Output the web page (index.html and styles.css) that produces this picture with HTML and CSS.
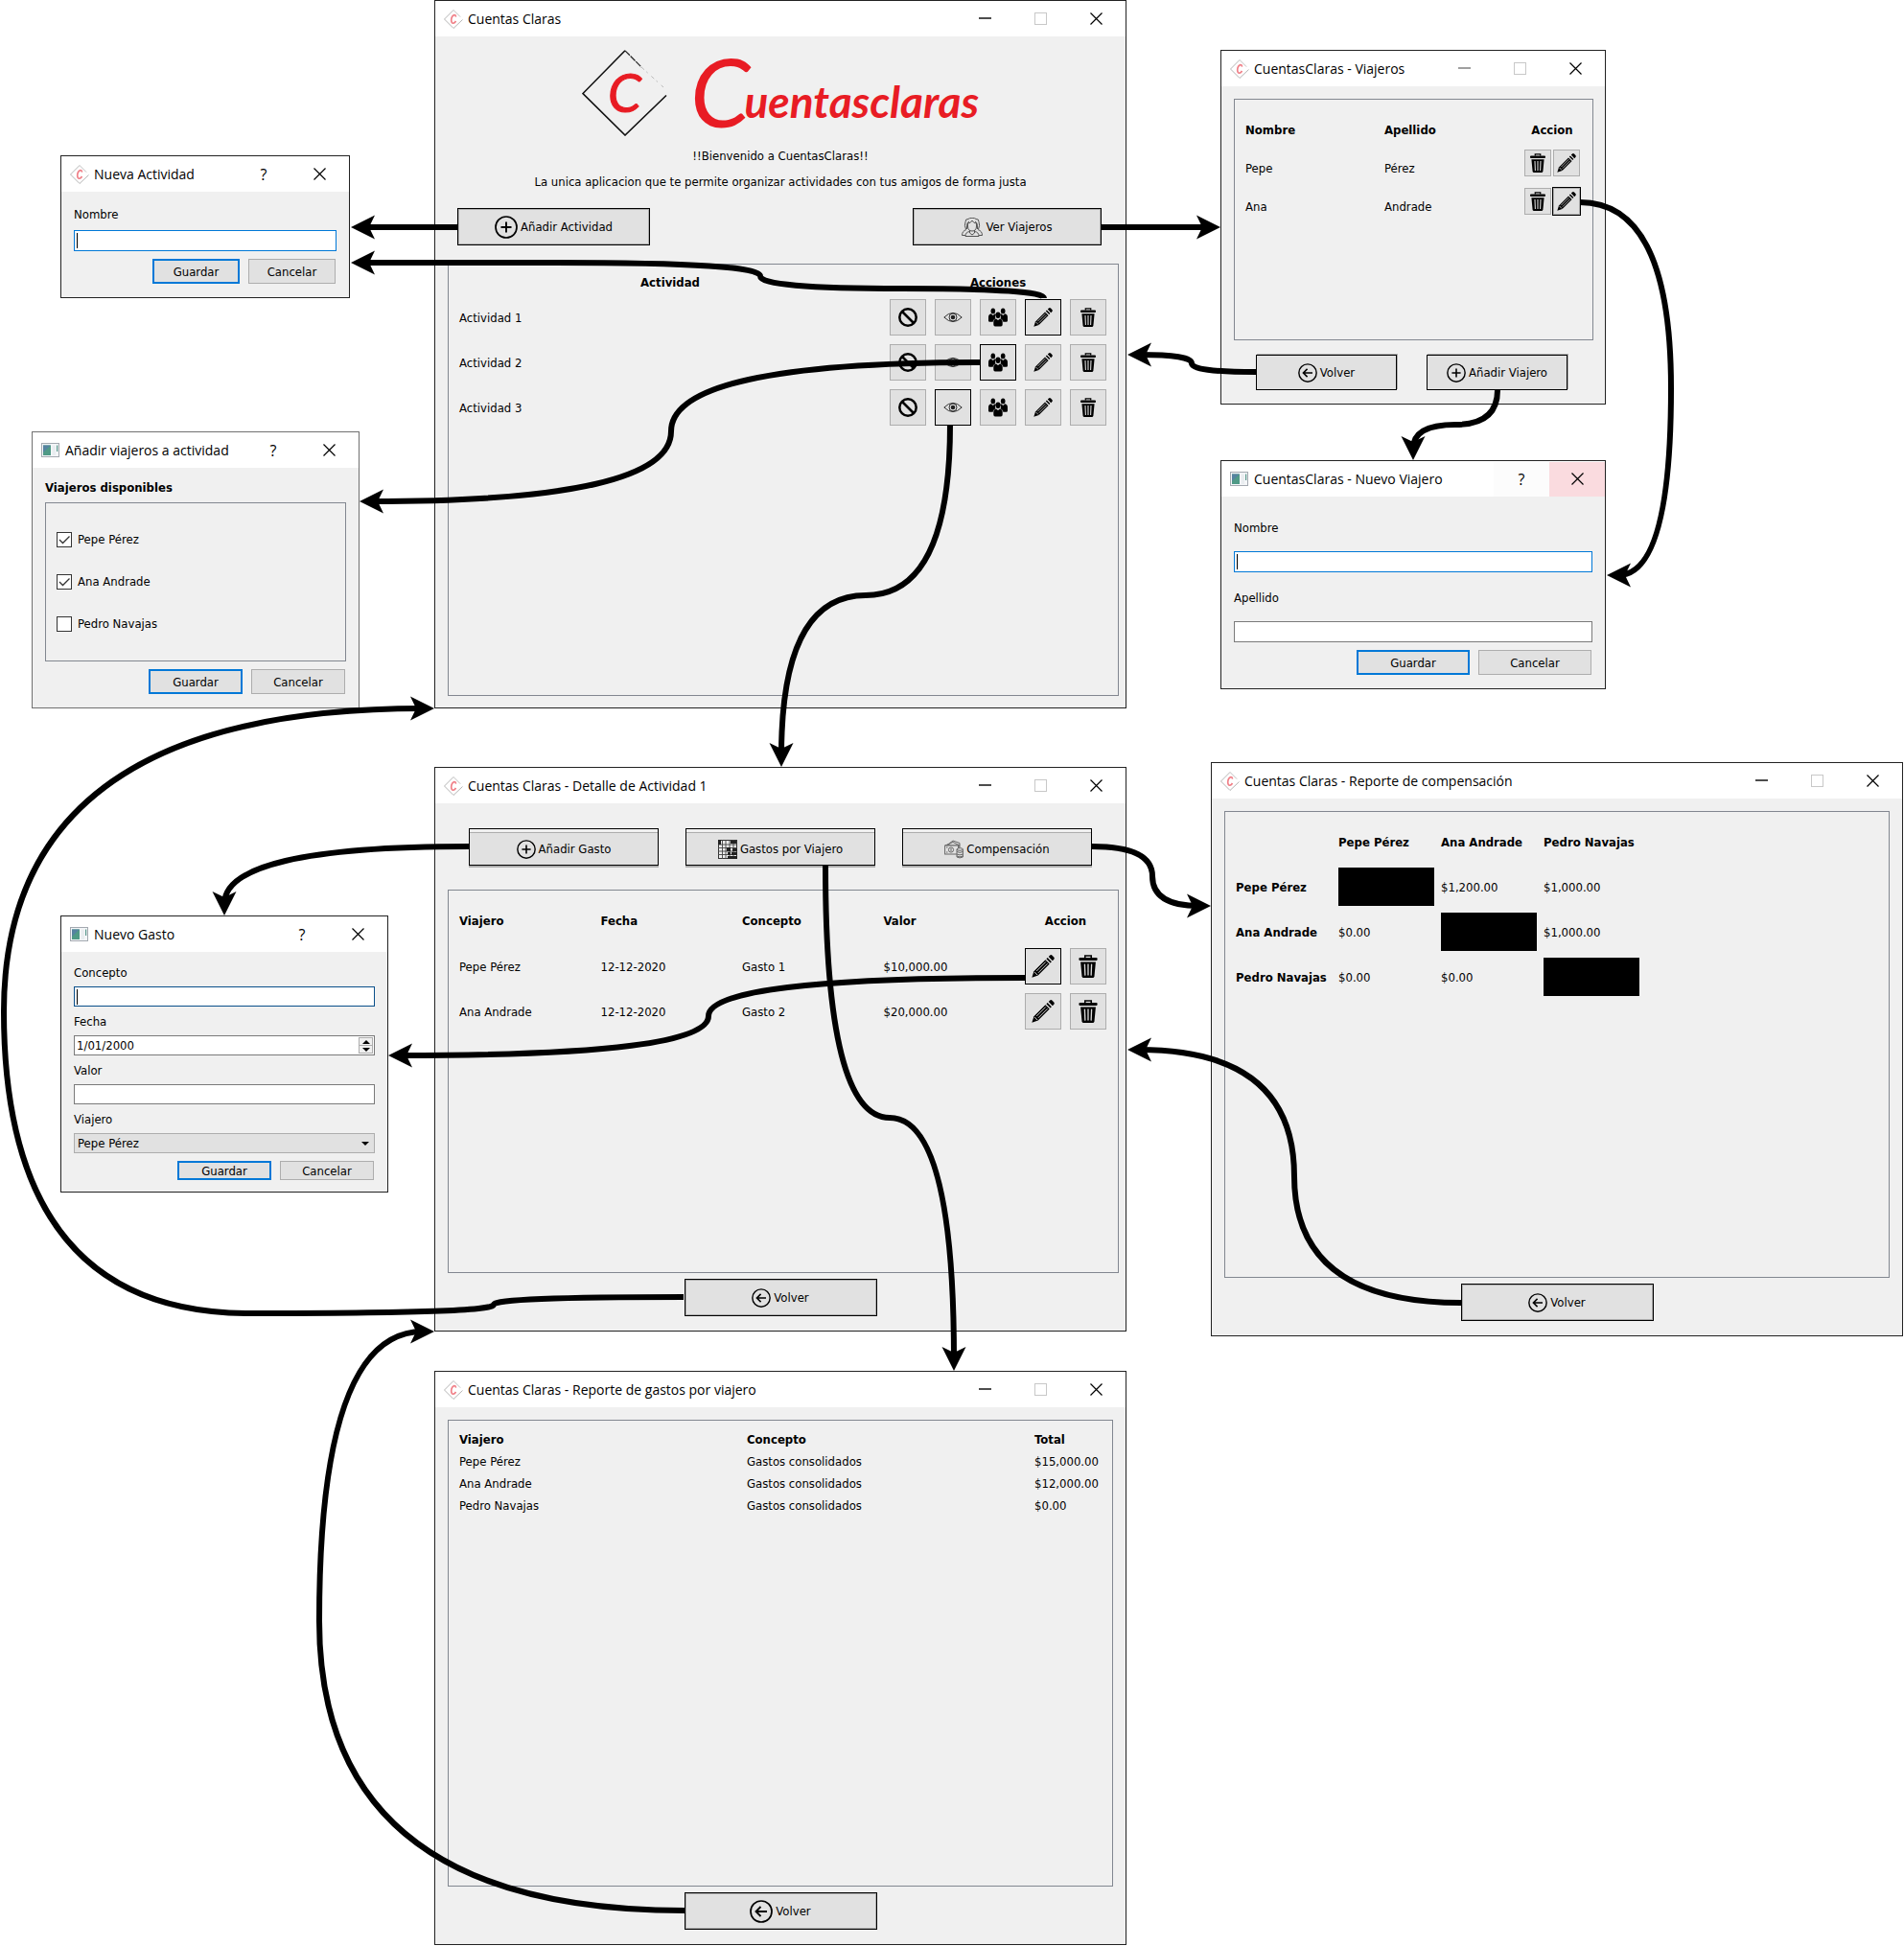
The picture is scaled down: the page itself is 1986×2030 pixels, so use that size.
FILE: index.html
```html
<!DOCTYPE html>
<html lang="es">
<head>
<meta charset="utf-8">
<title>Cuentas Claras - Mapa de navegación</title>
<meta name="viewport" content="width=device-width, initial-scale=1">
<link rel="stylesheet" href="styles.css">
</head>
<body>

<svg class="symbols" aria-hidden="true">
  <symbol id="i-logo" viewBox="0 0 20 20">
    <path d="M17 7.500 10 .5 .5 10 10 19.500 19.500 10.500" fill="none" stroke="#b4b4b4"/>
    <path d="M10 .5 17 7.500" fill="none" stroke="#e4e4e4"/>
    <path d="M12.400 7.600Q12.500 5.500 10.800 5.600 8 6.300 7.700 11q.2 3.600 2.200 3.200 1.600-.4 2.600-2.200" fill="none" stroke="#f08088" stroke-width="1.700"/>
  </symbol>
  <symbol id="i-app" viewBox="0 0 19 16">
    <rect x=".5" y=".5" width="18" height="14" fill="#f4f6f8" stroke="#a3a9b0"/>
    <rect x="2" y="2.500" width="8" height="10.500" fill="#4f9a86"/>
    <path d="M2 2.500h8L2 10z" fill="#5583a0"/>
    <rect x="11.500" y="2.500" width="3.500" height="10.500" fill="#e9edf0"/>
    <rect x="16" y="2.500" width="1.200" height="6.500" fill="#5b9a8e"/>
  </symbol>
  <symbol id="i-min" viewBox="0 0 13 13"><path d="M0 6h13" stroke="currentColor" stroke-width="1.400"/></symbol>
  <symbol id="i-max" viewBox="0 0 13 13"><rect x=".5" y=".5" width="12" height="12" fill="none" stroke="#c8c8c8"/></symbol>
  <symbol id="i-close" viewBox="0 0 13 13"><path d="M.5.5l12 12M12.500.5l-12 12" stroke="currentColor" stroke-width="1.200"/></symbol>
  <symbol id="i-plus" viewBox="0 0 24 24"><circle cx="12" cy="12" r="11" fill="none" stroke="currentColor" stroke-width="1.700"/><path d="M12 6.500v11M6.500 12h11" stroke="currentColor" stroke-width="1.900"/></symbol>
  <symbol id="i-back" viewBox="0 0 24 24"><circle cx="12" cy="12" r="11" fill="none" stroke="currentColor" stroke-width="1.700"/><path d="M18 12H7M11.500 7 6.500 12l5 5" fill="none" stroke="currentColor" stroke-width="1.900"/></symbol>
  <symbol id="i-ban" viewBox="0 0 20 20"><circle cx="10" cy="10" r="8.700" fill="none" stroke="currentColor" stroke-width="2.500"/><path d="M4 4l12 12" stroke="currentColor" stroke-width="2.500"/></symbol>
  <symbol id="i-eye" viewBox="0 0 20 20"><path d="M.8 10Q10 .8 19.200 10 10 19.200.8 10z" fill="none" stroke="#333"/><circle cx="10" cy="10" r="4" fill="none" stroke="#333"/><circle cx="10" cy="10" r="2.300" fill="#222"/></symbol>
  <symbol id="i-group" viewBox="0 0 20 20">
    <ellipse cx="4.800" cy="3.400" rx="2.300" ry="2.900"/><ellipse cx="15.200" cy="3.400" rx="2.300" ry="2.900"/>
    <path d="M0 13.500V10q0-3.300 2.800-3.700l2 1.600 2-1.600 1.200.6Q6 9 7.400 11.200 5 12.200 4.600 14.800H1.400Q0 14.800 0 13.500zM20 13.500V10q0-3.300-2.800-3.700l-2 1.600-2-1.600-1.200.6Q14 9 12.600 11.200q2.400 1 2.800 3.600h3.200q1.400 0 1.400-1.300z"/>
    <ellipse cx="10" cy="7.800" rx="2.500" ry="3.200"/><path d="M5.300 17.500V15q0-3 2.700-3.600l2 1.500 2-1.500q2.700.6 2.700 3.600v2.500q0 2-1.700 2H7q-1.700 0-1.700-2z"/>
  </symbol>
  <symbol id="i-pencil" viewBox="0 0 20 20">
    <path d="M14.800 1.600 16 .4q1-.7 2 .2l1.400 1.500q.8 1 0 1.900L18.200 5.200zM13.900 2.500l3.500 3.500-1.100 1.100-3.500-3.500z"/>
    <path d="M12 4.400 15.600 8 5.600 18 .3 19.700 2 14.400z"/><path d="M12.300 6.200 4.300 14.200M13.800 7.700l-8 8" stroke="#d8d8d8" stroke-width=".8"/><path d="M2.500 14.900l2.600 2.600" stroke="#d8d8d8" stroke-width=".8"/>
  </symbol>
  <symbol id="i-trash" viewBox="0 0 20 20">
    <path d="M7.300 2.600V.8h5.400v1.800" fill="none" stroke="currentColor" stroke-width="1.300"/><rect x="2" y="2.400" width="16" height="2.600" rx="1"/>
    <path d="M3.400 6.300h13.200l-1.200 12.400q-.2 1.300-1.500 1.300H6.100q-1.300 0-1.500-1.300z"/><path d="M7 8l.4 10M10 8v10M13 8l-.4 10" stroke="#dcdcdc" stroke-width="1.100"/>
  </symbol>
  <symbol id="i-people" viewBox="0 0 22 20">
    <g fill="none" stroke="#555" stroke-width="1"><path d="M4 4.500Q4 1 7 1.500q1-1.200 4-1.200T15 1.500q3-.5 3 3 1.500 4-.5 7.500M4 4.500q-1.500 4 .5 7.500M6.500 6q3 0 4.500-3 1.500 3 4.500 3v3q0 5-4.500 5T6.500 9zM8 4q-3 1-2.500 8M14 4q3 1 2.500 8M8.500 13v3l2.500 2 2.500-2v-3M8.500 14.500Q4 15 4 19.500h14q0-4.500-4.500-5M5 12.500Q.5 14 .5 18.500H4M17 12.500q4.500 1.500 4.500 6H18"/></g>
  </symbol>
  <symbol id="i-sheet" viewBox="0 0 20 20">
    <rect x=".5" y=".5" width="19" height="19" fill="#ededed" stroke="#333"/><path d="M0 5h20M0 8.500h20M0 12h20M0 15.500h20M4.500 0v20M8 0v20M12 0v20M16 0v20" stroke="#444" stroke-width=".9"/>
    <path d="M0 0h3v5H0zM13 1h6v3h-6zM9 8h4v4H9zM15 9h5v3h-5zM10 13h3v3h-3zM14 13h6v3h-6zM10 17h10v3H10z" fill="#222"/>
  </symbol>
  <symbol id="i-money" viewBox="0 0 20 20">
    <g fill="#e1e1e1" stroke="#666"><path d="M3 5.500 9 1l7 2.500V8zM1 6l8-3.500L16 6z"/><rect x=".6" y="6" width="14" height="9"/><circle cx="7" cy="10.500" r="2.600"/><path d="M2 8h1.500M2 13h1.500M7 9v3" /><path d="M13 10v8q3 1.800 6.400 0v-8z"/><ellipse cx="16.200" cy="10" rx="3.200" ry="1.300"/><path d="M13 12.500q3 1.800 6.400 0M13 15q3 1.800 6.400 0M13 17q3 1.800 6.400 0" fill="none"/></g>
  </symbol>
</svg>

<main class="canvas">

  <section class="window w-main">
    <header class="titlebar">
      <svg class="app-icon"><use href="#i-logo"/></svg><h2>Cuentas Claras</h2>
      <button class="cap" aria-label="Minimizar"><svg><use href="#i-min"/></svg></button><button class="cap" aria-label="Maximizar" disabled><svg><use href="#i-max"/></svg></button><button class="cap" aria-label="Cerrar"><svg><use href="#i-close"/></svg></button>
    </header>
    <div class="content">
      <div class="brand">
        <svg class="brand-mark" viewBox="0 0 89 90" aria-hidden="true">
          <path d="M45 .8 1 45.500 45 89 88 47.500" fill="none" stroke="#111" stroke-width="1.600"/>
          <path d="M45 .8 62 18" fill="none" stroke="#222" stroke-width="1.200" stroke-dasharray="7 1"/>
          <path d="M62 18 85 39" fill="none" stroke="#bbb" stroke-dasharray="4 3 2 5"/>
          <text x="27" y="65" class="mark-letter">C</text>
        </svg>
        <h1 class="wordmark"><span class="initial">C</span>uentasclaras</h1>
      </div>
      <p class="welcome">!!Bienvenido a CuentasClaras!!</p>
      <p class="welcome tagline">La unica aplicacion que te permite organizar actividades con tus amigos de forma justa</p>
      <div class="main-actions">
        <button class="btn w201"><svg class="i24"><use href="#i-plus"/></svg>Añadir Actividad</button>
        <button class="btn w197"><svg class="i22"><use href="#i-people"/></svg>Ver Viajeros</button>
      </div>
      <div class="panel main-panel">
        <table class="grid-9 activities">
          <colgroup><col><col class="c226"></colgroup>
          <thead><tr><th class="mid">Actividad</th><th class="mid">Acciones</th></tr></thead>
          <tbody>
            <tr><td>Actividad 1</td><td><div class="tools">
              <button class="tool" aria-label="Terminar"><svg><use href="#i-ban"/></svg></button><button class="tool" aria-label="Ver"><svg><use href="#i-eye"/></svg></button><button class="tool" aria-label="Viajeros"><svg><use href="#i-group"/></svg></button><button class="tool marked" aria-label="Editar"><svg><use href="#i-pencil"/></svg></button><button class="tool" aria-label="Borrar"><svg><use href="#i-trash"/></svg></button></div></td></tr>
            <tr><td>Actividad 2</td><td><div class="tools">
              <button class="tool" aria-label="Terminar"><svg><use href="#i-ban"/></svg></button><button class="tool" aria-label="Ver"><svg><use href="#i-eye"/></svg></button><button class="tool marked" aria-label="Viajeros"><svg><use href="#i-group"/></svg></button><button class="tool" aria-label="Editar"><svg><use href="#i-pencil"/></svg></button><button class="tool" aria-label="Borrar"><svg><use href="#i-trash"/></svg></button></div></td></tr>
            <tr><td>Actividad 3</td><td><div class="tools">
              <button class="tool" aria-label="Terminar"><svg><use href="#i-ban"/></svg></button><button class="tool marked" aria-label="Ver"><svg><use href="#i-eye"/></svg></button><button class="tool" aria-label="Viajeros"><svg><use href="#i-group"/></svg></button><button class="tool" aria-label="Editar"><svg><use href="#i-pencil"/></svg></button><button class="tool" aria-label="Borrar"><svg><use href="#i-trash"/></svg></button></div></td></tr>
          </tbody>
        </table>
      </div>
    </div>
  </section>

  <section class="window w-travelers">
    <header class="titlebar">
      <svg class="app-icon"><use href="#i-logo"/></svg><h2>CuentasClaras - Viajeros</h2>
      <button class="cap dim" aria-label="Minimizar"><svg><use href="#i-min"/></svg></button><button class="cap" aria-label="Maximizar" disabled><svg><use href="#i-max"/></svg></button><button class="cap" aria-label="Cerrar"><svg><use href="#i-close"/></svg></button>
    </header>
    <div class="content">
      <div class="panel travelers-panel">
        <table class="travelers">
          <colgroup><col class="c145"><col><col class="c58"></colgroup>
          <thead><tr><th>Nombre</th><th>Apellido</th><th class="mid">Accion</th></tr></thead>
          <tbody>
            <tr><td>Pepe</td><td>Pérez</td><td class="top"><div class="tools tight"><button class="tool small" aria-label="Borrar"><svg><use href="#i-trash"/></svg></button><button class="tool small" aria-label="Editar"><svg><use href="#i-pencil"/></svg></button></div></td></tr>
            <tr><td>Ana</td><td>Andrade</td><td class="top"><div class="tools tight"><button class="tool small" aria-label="Borrar"><svg><use href="#i-trash"/></svg></button><button class="tool small marked" aria-label="Editar"><svg><use href="#i-pencil"/></svg></button></div></td></tr>
          </tbody>
        </table>
      </div>
      <div class="travelers-actions">
        <button class="btn flat w147"><svg class="i20"><use href="#i-back"/></svg>Volver</button>
        <button class="btn flat w147"><svg class="i20"><use href="#i-plus"/></svg>Añadir Viajero</button>
      </div>
    </div>
  </section>

  <section class="window w-activity">
    <header class="titlebar">
      <svg class="app-icon"><use href="#i-logo"/></svg><h2>Nueva Actividad</h2>
      <button class="cap" aria-label="Ayuda">?</button><button class="cap" aria-label="Cerrar"><svg><use href="#i-close"/></svg></button>
    </header>
    <form class="content form activity-form">
      <label for="act-nombre">Nombre</label>
      <input class="field active" id="act-nombre" type="text">
      <div class="dialog-actions"><button type="button" class="dlg primary w91">Guardar</button><button type="button" class="dlg w91">Cancelar</button></div>
    </form>
  </section>

  <section class="window soft w-assign">
    <header class="titlebar">
      <svg class="app-icon win"><use href="#i-app"/></svg><h2>Añadir viajeros a actividad</h2>
      <button class="cap" aria-label="Ayuda">?</button><button class="cap" aria-label="Cerrar"><svg><use href="#i-close"/></svg></button>
    </header>
    <form class="content form assign-form">
      <h3>Viajeros disponibles</h3>
      <div class="panel check-list">
        <label><input type="checkbox" checked>Pepe Pérez</label>
        <label><input type="checkbox" checked>Ana Andrade</label>
        <label><input type="checkbox">Pedro Navajas</label>
      </div>
      <div class="dialog-actions"><button type="button" class="dlg primary w98">Guardar</button><button type="button" class="dlg w98">Cancelar</button></div>
    </form>
  </section>

  <section class="window w-traveler">
    <header class="titlebar">
      <svg class="app-icon win"><use href="#i-app"/></svg><h2>CuentasClaras - Nuevo Viajero</h2>
      <button class="cap faded" aria-label="Ayuda">?</button><button class="cap hot" aria-label="Cerrar"><svg><use href="#i-close"/></svg></button>
    </header>
    <form class="content form traveler-form">
      <label for="vj-nombre">Nombre</label>
      <input class="field active" id="vj-nombre" type="text">
      <label for="vj-apellido">Apellido</label>
      <input class="field" id="vj-apellido" type="text">
      <div class="dialog-actions"><button type="button" class="dlg primary w118">Guardar</button><button type="button" class="dlg w118">Cancelar</button></div>
    </form>
  </section>

  <section class="window w-detail">
    <header class="titlebar">
      <svg class="app-icon"><use href="#i-logo"/></svg><h2>Cuentas Claras - Detalle de Actividad 1</h2>
      <button class="cap" aria-label="Minimizar"><svg><use href="#i-min"/></svg></button><button class="cap" aria-label="Maximizar" disabled><svg><use href="#i-max"/></svg></button><button class="cap" aria-label="Cerrar"><svg><use href="#i-close"/></svg></button>
    </header>
    <div class="content">
      <div class="detail-actions">
        <button class="btn lifted"><svg class="i20"><use href="#i-plus"/></svg>Añadir Gasto</button>
        <button class="btn lifted"><svg class="i20"><use href="#i-sheet"/></svg>Gastos por Viajero</button>
        <button class="btn lifted"><svg class="i20"><use href="#i-money"/></svg>Compensación</button>
      </div>
      <div class="panel detail-panel">
        <table class="grid-9 expenses">
          <colgroup><col><col><col><col><col class="c85"></colgroup>
          <thead><tr><th>Viajero</th><th>Fecha</th><th>Concepto</th><th>Valor</th><th class="mid">Accion</th></tr></thead>
          <tbody>
            <tr><td>Pepe Pérez</td><td>12-12-2020</td><td>Gasto 1</td><td>$10,000.00</td><td><div class="tools"><button class="tool big marked" aria-label="Editar"><svg><use href="#i-pencil"/></svg></button><button class="tool big" aria-label="Borrar"><svg><use href="#i-trash"/></svg></button></div></td></tr>
            <tr><td>Ana Andrade</td><td>12-12-2020</td><td>Gasto 2</td><td>$20,000.00</td><td><div class="tools"><button class="tool big" aria-label="Editar"><svg><use href="#i-pencil"/></svg></button><button class="tool big" aria-label="Borrar"><svg><use href="#i-trash"/></svg></button></div></td></tr>
          </tbody>
        </table>
      </div>
      <div class="foot"><button class="btn w201"><svg class="i20"><use href="#i-back"/></svg>Volver</button></div>
    </div>
  </section>

  <section class="window w-expense">
    <header class="titlebar">
      <svg class="app-icon win"><use href="#i-app"/></svg><h2>Nuevo Gasto</h2>
      <button class="cap" aria-label="Ayuda">?</button><button class="cap" aria-label="Cerrar"><svg><use href="#i-close"/></svg></button>
    </header>
    <form class="content form expense-form">
      <label for="g-concepto">Concepto</label>
      <input class="field active deep" id="g-concepto" type="text">
      <label for="g-fecha">Fecha</label>
      <div class="field date"><input id="g-fecha" type="text" value="1/01/2000"><span class="spin"><button type="button" aria-label="Subir"></button><button type="button" class="down" aria-label="Bajar"></button></span></div>
      <label for="g-valor">Valor</label>
      <input class="field" id="g-valor" type="text">
      <label for="g-viajero">Viajero</label>
      <select id="g-viajero" class="field"><option>Pepe Pérez</option><option>Ana Andrade</option><option>Pedro Navajas</option></select>
      <div class="dialog-actions"><button type="button" class="dlg primary w98">Guardar</button><button type="button" class="dlg w98">Cancelar</button></div>
    </form>
  </section>

  <section class="window w-balance">
    <header class="titlebar">
      <svg class="app-icon"><use href="#i-logo"/></svg><h2>Cuentas Claras - Reporte de compensación</h2>
      <button class="cap" aria-label="Minimizar"><svg><use href="#i-min"/></svg></button><button class="cap" aria-label="Maximizar" disabled><svg><use href="#i-max"/></svg></button><button class="cap" aria-label="Cerrar"><svg><use href="#i-close"/></svg></button>
    </header>
    <div class="content">
      <div class="panel report-panel">
        <table class="balance">
          <thead><tr><td></td><th>Pepe Pérez</th><th>Ana Andrade</th><th>Pedro Navajas</th></tr></thead>
          <tbody>
            <tr><th>Pepe Pérez</th><td class="void"></td><td>$1,200.00</td><td>$1,000.00</td></tr>
            <tr><th>Ana Andrade</th><td>$0.00</td><td class="void"></td><td>$1,000.00</td></tr>
            <tr><th>Pedro Navajas</th><td>$0.00</td><td>$0.00</td><td class="void"></td></tr>
          </tbody>
        </table>
      </div>
      <div class="foot"><button class="btn w201"><svg class="i20"><use href="#i-back"/></svg>Volver</button></div>
    </div>
  </section>

  <section class="window w-report">
    <header class="titlebar">
      <svg class="app-icon"><use href="#i-logo"/></svg><h2>Cuentas Claras - Reporte de gastos por viajero</h2>
      <button class="cap" aria-label="Minimizar"><svg><use href="#i-min"/></svg></button><button class="cap" aria-label="Maximizar" disabled><svg><use href="#i-max"/></svg></button><button class="cap" aria-label="Cerrar"><svg><use href="#i-close"/></svg></button>
    </header>
    <div class="content">
      <div class="panel report-panel">
        <table class="totals">
          <colgroup><col class="c300"><col class="c300"><col></colgroup>
          <thead><tr><th>Viajero</th><th>Concepto</th><th>Total</th></tr></thead>
          <tbody>
            <tr><td>Pepe Pérez</td><td>Gastos consolidados</td><td>$15,000.00</td></tr>
            <tr><td>Ana Andrade</td><td>Gastos consolidados</td><td>$12,000.00</td></tr>
            <tr><td>Pedro Navajas</td><td>Gastos consolidados</td><td>$0.00</td></tr>
          </tbody>
        </table>
      </div>
      <div class="foot"><button class="btn w201"><svg class="i24"><use href="#i-back"/></svg>Volver</button></div>
    </div>
  </section>

  <!-- Navigation between windows; every path stops 12px before its arrow tip -->
  <svg class="flows" aria-hidden="true">
    <defs><marker id="tip" markerUnits="userSpaceOnUse" markerWidth="26" markerHeight="26" refX="13" refY="13" orient="auto"><path d="M25 13 0 .5 6 13 0 25.500z"/></marker></defs>
    <g class="flow">
      <path d="M477 237H378"/>
      <path d="M1149 237H1261"/>
      <path d="M1089 311Q1089 301 941 301T793 288Q793 274 580 274H378"/>
      <path d="M1023 378Q700 378 700 450Q700 523 387 523"/>
      <path d="M991 443Q991 621 903 621Q815 621 815 788"/>
      <path d="M1310 388Q1243 388 1243 379Q1243 370 1188 370"/>
      <path d="M1562 407Q1562 443 1518 443Q1474 443 1474 468"/>
      <path d="M1648 211Q1743 211 1743 405Q1743 600 1688 600"/>
      <path d="M713 1353Q515 1353 515 1361Q515 1370 260 1370Q4 1370 4 1055Q4 739 441 739"/>
      <path d="M489 883Q234 883 234 943"/>
      <path d="M1139 883Q1202 883 1202 914Q1202 945 1251 945"/>
      <path d="M1070 1020Q739 1020 739 1060Q739 1101 417 1101"/>
      <path d="M861 903Q861 1166 928 1166Q995 1166 995 1418"/>
      <path d="M1524 1359Q1350 1359 1350 1227Q1350 1095 1188 1095"/>
      <path d="M714 1993Q333 1993 333 1691Q333 1389 441 1389"/>
    </g>
  </svg>
</main>
</body>
</html>
```

FILE: styles.css
```css
* { box-sizing: border-box; }

body {
  margin: 0;
  background: #fff;
  color: #000;
  font: 13px/20px "DejaVu Sans Condensed", "Noto Sans", sans-serif;
}

h1, h2, h3, p { margin: 0; font-weight: normal; }
button, input, select { font: inherit; color: inherit; margin: 0; padding: 0; }
svg { display: block; fill: currentColor; }

.symbols { display: none; }

.canvas { position: relative; min-height: 100vh; }

.flows {
  position: absolute;
  inset: 0;
  width: 100%;
  height: 100%;
  overflow: visible;
  pointer-events: none;
  color: #000;
}
.flow { fill: none; stroke: #000; stroke-width: 6px; }
.flow path { marker-end: url(#tip); }
.flows marker path { fill: #000; stroke: none; }

/* Windows */
.window {
  position: absolute;
  display: flex;
  flex-direction: column;
  border: 1px solid #222;
  background: #f0f0f0;
}
.window.soft { border-color: #707070; }

.w-main      { left: 453px;  top: 0;      width: 722px; min-height: 739px; }
.w-travelers { left: 1273px; top: 52px;   width: 402px; min-height: 370px; }
.w-activity  { left: 63px;   top: 162px;  width: 302px; min-height: 149px; }
.w-assign    { left: 33px;   top: 450px;  width: 342px; min-height: 289px; }
.w-traveler  { left: 1273px; top: 480px;  width: 402px; min-height: 239px; }
.w-detail    { left: 453px;  top: 800px;  width: 722px; min-height: 589px; }
.w-expense   { left: 63px;   top: 955px;  width: 342px; min-height: 289px; }
.w-balance   { left: 1263px; top: 795px;  width: 722px; min-height: 599px; }
.w-report    { left: 453px;  top: 1430px; width: 722px; min-height: 599px; }

.titlebar {
  display: flex;
  align-items: center;
  height: 37px;
  padding: 0 2px 0 9px;
  background: #fff;
}
.titlebar h2 {
  flex: 1;
  margin-left: 5px;
  font: 14px/20px "Open Sans", "Noto Sans", sans-serif;
  white-space: nowrap;
}
.app-icon { width: 20px; height: 20px; }
.app-icon.win { width: 19px; height: 16px; margin-right: 1px; }

.cap {
  display: flex;
  align-items: center;
  justify-content: center;
  width: 58px;
  height: 36px;
  border: 0;
  background: none;
  font: 16px/20px "Open Sans", "Noto Sans", sans-serif;
}
.cap svg { width: 13px; height: 13px; }
.cap.dim { color: #777; }
.cap.faded { background: #fcfcfc; }
.cap.hot { background: #fadbdf; }
.w-traveler .titlebar { padding-right: 0; }

.content { flex: 1; display: flex; flex-direction: column; }
.panel { border: 1px solid #828790; }

/* Buttons */
.btn {
  display: flex;
  align-items: center;
  justify-content: center;
  gap: 3px;
  width: 198px;
  height: 39px;
  padding-top: 1px;
  border: 1px solid #000;
  background: #e1e1e1;
  box-shadow: inset 0 0 0 1px #adadad;
  white-space: nowrap;
}
.btn.flat { height: 37px; padding: 0; box-shadow: 1px -1px 0 #adadad; }
.btn.lifted {
  padding-top: 4px;
  box-shadow: 0 2px 0 #adadad, inset 0 3px 0 #f0f0f0, inset 0 4px 0 #adadad;
}
.i20 { width: 20px; height: 20px; }
.i22 { width: 22px; height: 20px; }
.i24 { width: 24px; height: 24px; }
.w91 { width: 91px; }
.w98 { width: 98px; }
.w118 { width: 118px; }
.w147 { width: 147px; }
.w197 { width: 197px; }
.w201 { width: 201px; }

.tools { display: flex; gap: 9px; }
.tools.tight { gap: 2px; }
.tool {
  display: flex;
  align-items: center;
  justify-content: center;
  width: 38px;
  height: 38px;
  border: 1px solid #adadad;
  background: #e1e1e1;
}
.tool svg { width: 20px; height: 20px; }
.tool.big svg { width: 24px; height: 24px; }
.tool.small { width: 28px; height: 28px; }
.tool.marked { border-color: #000; }
.tool.small.marked { outline: 1px solid #000; border-color: #adadad; }

/* Tables */
table { width: 100%; table-layout: fixed; border-collapse: collapse; }
th, td { padding: 0; text-align: left; white-space: nowrap; }
th { font-weight: bold; }
.mid { text-align: center; }
.top { vertical-align: top; }
.c58 { width: 58px; }
.c85 { width: 85px; }
.c145 { width: 145px; }
.c226 { width: 226px; }
.c300 { width: 300px; }

.grid-9 { border-collapse: separate; border-spacing: 9px; }
.grid-9 td:not(:last-child) { padding-top: 2px; }
.activities th { height: 17px; line-height: 17px; }
.expenses th { height: 40px; padding-top: 2px; }
.travelers tr { height: 40px; }
.totals tr { height: 23px; }
.balance { width: auto; border-collapse: separate; border-spacing: 7px; }
.balance th, .balance td { width: 100px; height: 40px; padding-top: 2px; }
.balance .void { background: #000; }

/* Main window */
.brand { display: flex; justify-content: center; height: 90px; margin-top: 14px; }
.brand-mark { width: 89px; height: 90px; }
.mark-letter { font: italic 56px "Lato", sans-serif; fill: #e81c24; stroke: #e81c24; }
.wordmark {
  margin-left: 24px;
  font: italic bold 46px/108px "Lato", sans-serif;
  color: #e81c24;
}
.initial { margin-right: -6px; font-weight: normal; font-size: 100px; line-height: 60px; vertical-align: -10px; }
.welcome { margin-top: 11px; text-align: center; }
.tagline { margin-top: 7px; }
.main-actions { display: flex; justify-content: space-between; margin: 17px 25px 0 23px; }
.main-panel { flex: 1; margin: 19px 7px 12px 13px; padding: 1px 3px 0 2px; }

/* Travelers */
.travelers-panel { height: 252px; margin: 13px 12px 0 13px; padding: 12px 13px 0 11px; }
.travelers-actions { display: flex; gap: 31px; margin: 15px 0 14px 36px; }

/* Detail */
.detail-actions { display: flex; gap: 28px; margin: 26px 33px 0 35px; }
.detail-panel { flex: 1; margin: 25px 7px 0 13px; padding: 2px 3px 2px 2px; }
.foot { display: flex; justify-content: center; padding: 6px 0 15px; }

/* Reports */
.report-panel { flex: 1; margin: 13px 13px 0; padding: 4px 4px 0; }
.w-report .report-panel { padding: 8px 11px 0; }

/* Dialogs */
.form { padding: 0 13px; }
.form label { display: block; }
.field {
  width: 100%;
  height: 22px;
  padding: 0 2px;
  border: 1px solid #7a7a7a;
  border-radius: 0;
  background: #fff;
  outline: 0;
}
.field.active {
  border-color: #0078d7;
  background: linear-gradient(#000, #000) 2px 2px / 1px 16px no-repeat #fff;
}
.field.deep { border-color: #0a4f8a; }
.dialog-actions { display: flex; justify-content: flex-end; gap: 9px; margin: 8px 1px 0 0; }
.dlg { height: 26px; padding-top: 1px; border: 1px solid #adadad; background: #e1e1e1; }
.dlg.primary { border: 2px solid #0078d7; }

.activity-form label { margin: 14px 0 6px; }

.assign-form h3 { margin: 11px 0 5px; font-weight: bold; font-size: 13px; }
.check-list { height: 166px; padding: 16px 11px; }
.check-list label { display: flex; align-items: center; gap: 6px; height: 44px; }
.check-list input {
  appearance: none;
  width: 16px;
  height: 16px;
  border: 1px solid #333;
  background: #fff;
}
.check-list input:checked {
  background: #fff url("data:image/svg+xml,%3Csvg xmlns='http://www.w3.org/2000/svg' viewBox='0 0 14 14'%3E%3Cpath d='M2 7l3.500 3.500L12.500 3.500' fill='none' stroke='%23333' stroke-width='1.300'/%3E%3C/svg%3E") center / 14px 14px no-repeat;
}

.traveler-form label { margin: 23px 0 14px; }
.traveler-form .field + label { margin: 17px 0 14px; }

.expense-form label { margin: 12px 0 4px; }
.expense-form .field { height: 21px; }
.expense-form .field + label { margin: 6px 0 4px; }
.expense-form .dlg { height: 20px; line-height: 15px; }
.date { display: flex; padding: 0 0 0 2px; }
.date input { flex: 1; min-width: 0; border: 0; background: none; outline: 0; }
.spin { display: grid; width: 15px; height: 17px; margin: 1px; background: #adadad; gap: 1px; padding: 1px; }
.spin button {
  border: 0;
  background: #f0f0f0 url("data:image/svg+xml,%3Csvg xmlns='http://www.w3.org/2000/svg' viewBox='0 0 8 4'%3E%3Cpath d='M4 0l4 4H0z'/%3E%3C/svg%3E") center / 8px 4px no-repeat;
}
.spin .down { background-image: url("data:image/svg+xml,%3Csvg xmlns='http://www.w3.org/2000/svg' viewBox='0 0 8 4'%3E%3Cpath d='M4 4l4-4H0z'/%3E%3C/svg%3E"); }
select.field {
  appearance: none;
  padding: 0 3px;
  border-color: #adadad;
  background: #e1e1e1 url("data:image/svg+xml,%3Csvg xmlns='http://www.w3.org/2000/svg' viewBox='0 0 8 4'%3E%3Cpath d='M4 4l4-4H0z'/%3E%3C/svg%3E") right 5px center / 8px 4px no-repeat;
}
```
